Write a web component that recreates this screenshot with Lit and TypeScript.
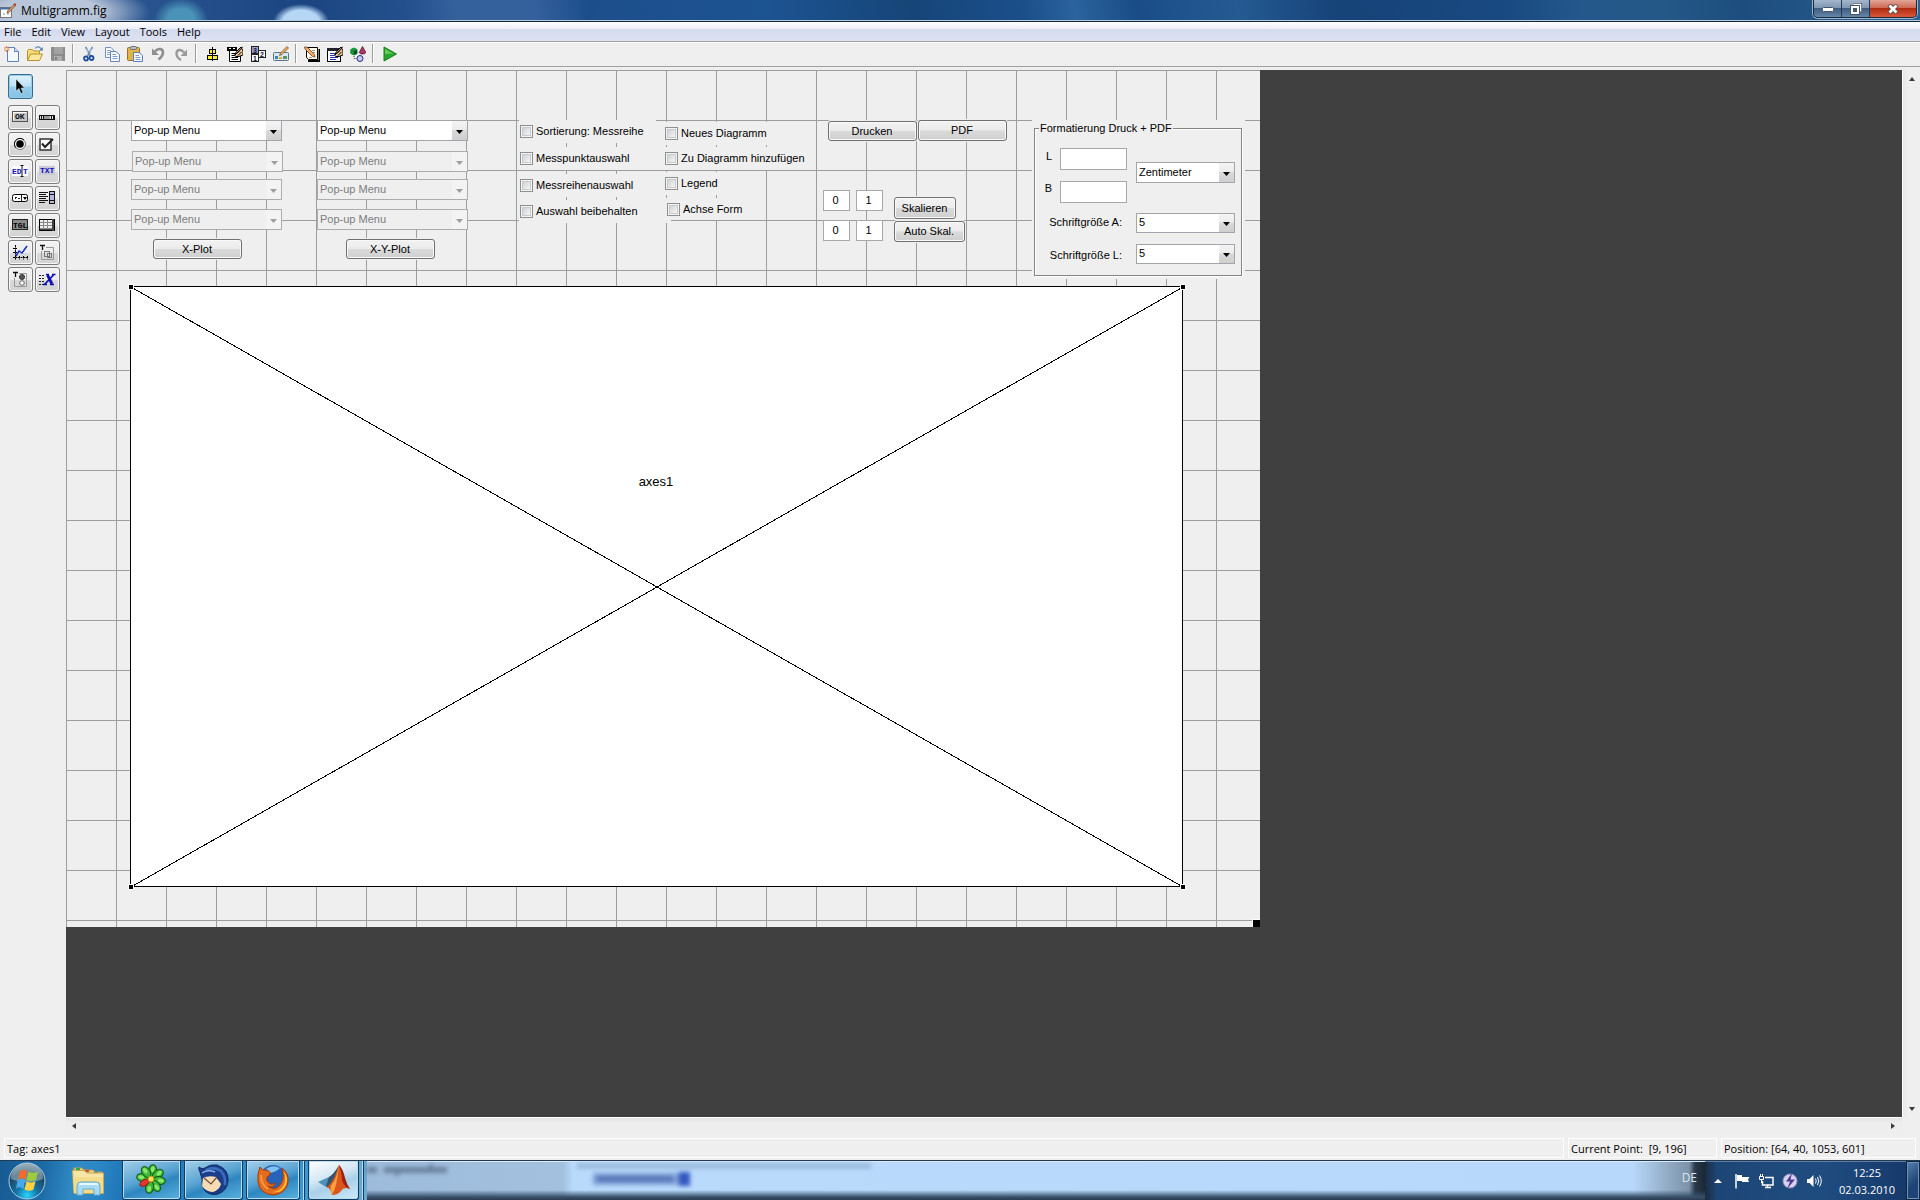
import { LitElement, html, svg, css, nothing } from "lit";
import type { TemplateResult, SVGTemplateResult } from "lit";
import { customElement } from "lit/decorators.js";
import { classMap } from "lit/directives/class-map.js";
import { styleMap } from "lit/directives/style-map.js";

interface Widget {
  kind: "popup" | "button" | "check" | "edit" | "label";
  id: string;
  text: string;
  x: number;
  y: number;
  w: number;
  h: number;
  off?: boolean;
}

const icon = (size: number, body: SVGTemplateResult): TemplateResult =>
  html`<svg width=${size} height=${size} viewBox="0 0 ${size} ${size}" aria-hidden="true">${body}</svg>`;

const MENUS = ["File", "Edit", "View", "Layout", "Tools", "Help"];

const pencil = svg`
  <path d="M15 0.500L16 2L9.500 9L7 10L8 7.500Z" fill="#f0a050" stroke="#6b4a35" stroke-width="0.800"/>
  <path d="M14 1L15.500 2.500" stroke="#b03a28" stroke-width="1.500"/>`;

/* Small hand holding a pen, drawn over menu-like pages. */
const hand = svg`
  <path d="M14 1L9.500 5.500L7.500 9.500L9 10.500H12L16 9V5Z" fill="#e8c69a" stroke="#000" stroke-width="1"/>
  <path d="M16 0.500L8 9M11 9.500L14.500 6M10 7.500L13 4.500" stroke="#000" stroke-width="1"/>`;

const TOOLS: (null | { name: string; art: SVGTemplateResult })[] = [
  {
    name: "New",
    art: svg`<path d="M3.500 1.500H10.500L14.500 5.500V15.500H3.500Z" fill="#f3f8ff" stroke="#5e82bd"/>
      <path d="M10.500 1.500V5.500H14.500" fill="#cfe0f7" stroke="#5e82bd"/>
      <path d="M2.500 0V6M0 3H5.500M0.500 0.800L4.700 5.200M4.700 0.800L0.500 5.200" stroke="#e0713f"/>
      <circle cx="2.500" cy="3" r="1.200" fill="#fff3c0"/>`,
  },
  {
    name: "Open",
    art: svg`<path d="M0.500 14.500V4.500L1.500 3.500H5.500L7 5H12.500V8" fill="#f6d978" stroke="#b8912a"/>
      <path d="M0.500 14.500L3.500 8H15.500L12.500 14.500Z" fill="#fbe89a" stroke="#b8912a"/>
      <path d="M8 2.500C10 0 13 0.500 14 3" fill="none" stroke="#5a84b5" stroke-width="1.200"/>
      <path d="M15.800 1V4.800H12Z" fill="#5a84b5"/>`,
  },
  {
    name: "Save",
    art: svg`<path d="M1 1H15V15H2L1 14Z" fill="#8c8c8c"/><rect x="4" y="1" width="9" height="7" fill="#a3a3a3"/>
      <rect x="4" y="10" width="8" height="5" fill="#adadad"/><rect x="5" y="11" width="2" height="3" fill="#808080"/>`,
  },
  null,
  {
    name: "Cut",
    art: svg`<path d="M4.500 1L9.500 10M11.500 1L6.500 10" stroke="#6f8db8" stroke-width="1.600"/>
      <path d="M5 3L7 6M11 3L9 6" stroke="#c9d8ec"/>
      <circle cx="5" cy="12.500" r="2" fill="none" stroke="#1f4f9c" stroke-width="1.800"/>
      <circle cx="10.500" cy="12" r="2" fill="none" stroke="#1f4f9c" stroke-width="1.800"/>`,
  },
  {
    name: "Copy",
    art: svg`<path d="M1.500 1.500H7L9.500 4V11.500H1.500Z" fill="#f5f9ff" stroke="#7290c2"/>
      <path d="M3 4.500H7M3 6.500H7M3 8.500H6" stroke="#8fa9d3"/>
      <path d="M6.500 5.500H12L15.500 8.500V15.500H6.500Z" fill="#f5f9ff" stroke="#6684ba"/>
      <path d="M8.500 8.500H12M8.500 10.500H13.500M8.500 12.500H13.500" stroke="#7f9bca"/>`,
  },
  {
    name: "Paste",
    art: svg`<rect x="0.500" y="1.500" width="12" height="13" rx="1" fill="#e2b440" stroke="#957130"/>
      <rect x="3.500" y="0.500" width="6" height="3" rx="1" fill="#b5bac4" stroke="#6d727c"/>
      <path d="M6.500 6.500H12L15.500 9.500V15.500H6.500Z" fill="#f5f9ff" stroke="#5b7cb5"/>
      <path d="M8.500 9.500H12M8.500 11.500H13.500M8.500 13.500H13.500" stroke="#7f9bca"/>`,
  },
  {
    name: "Undo",
    art: svg`<path d="M5 5.500C8 1.500 13 2.500 13 6.500C12.800 10 10.500 12 8.500 13.500" fill="none" stroke="#8e8e8e" stroke-width="2.600"/>
      <path d="M2 2.500V9H9Z" fill="#8e8e8e"/>`,
  },
  {
    name: "Redo",
    art: svg`<path d="M11 6.500C8 2.500 3.500 3.500 3.500 7.500C3.700 11 6 13 8 14" fill="none" stroke="#9a9a9a" stroke-width="2.400"/>
      <path d="M14 3.500V10H7.500Z" fill="#9a9a9a"/>`,
  },
  null,
  {
    name: "Align Objects",
    art: svg`<g shape-rendering="crispEdges"><path d="M8.500 1V15" stroke="#000"/>
      <rect x="5.500" y="3.500" width="6" height="4" fill="#ffee20" stroke="#000"/>
      <rect x="3.500" y="9.500" width="10" height="4" fill="#ffee20" stroke="#000"/><path d="M8.500 3V14" stroke="#000"/></g>`,
  },
  {
    name: "Menu Editor",
    art: svg`<path d="M0.500 1.500H9.500V4.500H13.500V15.500H2.500V4.500H0.500Z" fill="#fff" stroke="#000"/>
      <rect x="0" y="1" width="10" height="4" fill="#000"/><path d="M2 2.500H4M6 2.500H8" stroke="#fff"/>
      <path d="M4.500 7.500H8M4.500 9.500H8M4.500 11.500H11M4.500 13.500H11" stroke="#000"/>${hand}`,
  },
  {
    name: "Tab Order Editor",
    art: svg`<g shape-rendering="crispEdges"><rect x="1.500" y="0.500" width="7" height="7" fill="#9fa2c8" stroke="#222"/>
      <rect x="8.500" y="4.500" width="7" height="7" fill="#fff" stroke="#222"/>
      <rect x="1.500" y="8.500" width="7" height="7" fill="#fff" stroke="#222"/></g>
      <g font-family="Liberation Sans" font-size="7" font-weight="bold" fill="#10103c"><text x="3" y="6.500">3</text><text x="10" y="10.500">2</text><text x="3" y="14.500">1</text></g>`,
  },
  {
    name: "Toolbar Editor",
    art: svg`<rect x="0.500" y="6.500" width="15" height="8" rx="1" fill="#d9e8f5" stroke="#5c7487"/>
      <rect x="2" y="10" width="3" height="3" fill="#467eb0"/><rect x="6" y="11" width="3" height="2" fill="#d7aa3c"/>
      <rect x="10" y="10" width="4" height="3" fill="#5b9561"/>
      <path d="M14 0.500L15.500 2L9 8.500L6.500 9.500L7.500 7Z" fill="#f0b060" stroke="#7a5030" stroke-width="0.800"/>`,
  },
  null,
  {
    name: "M-file Editor",
    art: svg`<path d="M4 15H15.500V3" fill="none" stroke="#000" stroke-width="2"/>
      <path d="M2.500 1.500H13.500V13.500H4.500L2.500 11.500Z" fill="#fffbe8" stroke="#000"/>
      <path d="M8 4.500H11M9 6.500H11M5 11.500H8" stroke="#999"/>
      <path d="M0.500 1L3 1L10.500 8.500L11 11L8.500 10.500L1 3Z" fill="#f3ad6b" stroke="#6b3d20" stroke-width="0.800"/>`,
  },
  {
    name: "Property Inspector",
    art: svg`<rect x="0.500" y="2.500" width="13" height="13" fill="#fff" stroke="#000"/><rect x="0" y="2" width="14" height="3" fill="#223"/>
      <path d="M3 7.500H8M3 9.500H7M3 11.500H11M3 13.500H9" stroke="#2233c0"/>${hand}`,
  },
  {
    name: "Object Browser",
    art: svg`<path d="M4 2L7 3.500V7.500L4 9L0.800 7.500V3.500Z" fill="#1d8c3c" stroke="#093"/><path d="M4 5.500V9L7 7.500V4Z" fill="#054a1c"/>
      <path d="M12.500 0.500L15.800 6.500C15 8.500 10 8.500 9.300 6.500Z" fill="#b03668" stroke="#511030" stroke-width="0.800"/>
      <circle cx="10" cy="12.500" r="3" fill="#c2caf5" stroke="#26307a"/>
      <path d="M4 10V12.500H6.500" fill="none" stroke="#333" stroke-dasharray="1 1"/>`,
  },
  null,
  {
    name: "Run",
    art: svg`<path d="M3 1L15.500 8L3 15Z" fill="#2aa52e" stroke="#14801c"/><path d="M4 3L12 7.500L4 8Z" fill="#66cc5c"/>`,
  },
];

const glyph = (text: string, fill: string, x: number, y: number) =>
  svg`<text x=${x} y=${y} font-family="Liberation Mono" font-size="8" font-weight="bold" fill=${fill}>${text}</text>`;

const PALETTE: { name: string; art: SVGTemplateResult }[] = [
  { name: "Push Button", art: svg`<rect x="0.500" y="2.500" width="15" height="10" fill="#c6c6c6" stroke="#555"/><path d="M1.500 11.500V3.500H14.500" stroke="#fff" fill="none"/>${glyph("OK", "#111", 3, 10)}` },
  { name: "Slider", art: svg`<g shape-rendering="crispEdges"><rect x="0" y="6" width="16" height="5" fill="#111"/><path d="M1 8.500H5M11 8.500H15" stroke="#ddd" stroke-width="3" stroke-dasharray="1 1"/><rect x="5" y="7" width="6" height="3" fill="#9a9a9a"/></g>` },
  { name: "Radio Button", art: svg`<circle cx="8" cy="8" r="5.500" fill="#fff" stroke="#777"/><path d="M4 12A5.500 5.500 0 0 1 12 4" fill="none" stroke="#111"/><circle cx="8" cy="8" r="3.800" fill="#000"/>` },
  { name: "Check Box", art: svg`<rect x="1" y="3" width="11" height="11" fill="#fff" stroke="#333" stroke-width="1.500"/><path d="M3 7.500L6 11L14 3" fill="none" stroke="#222" stroke-width="2"/>` },
  { name: "Edit Text", art: svg`<rect x="0" y="3" width="16" height="10" fill="#fff"/>${glyph("ED", "#1212b8", 0, 10.5)}${glyph("T", "#1212b8", 11, 10.5)}<path d="M8.500 2.500H11.500M10 3V13M8.500 13.500H11.500" stroke="#111"/>` },
  { name: "Static Text", art: svg`<rect x="0" y="3" width="16" height="9" fill="#c9c9d8"/>${glyph("TXT", "#1212b8", 1, 10)}` },
  { name: "Pop-up Menu", art: svg`<rect x="0.500" y="4.500" width="15" height="7" rx="2" fill="#fff" stroke="#000"/><path d="M3 7.500H5M3 8.500H4M6 8.500H8M9.500 5V11" stroke="#222"/><path d="M11 7H15L13 10Z" fill="#000"/>` },
  { name: "Listbox", art: svg`<g shape-rendering="crispEdges"><path d="M0 2.500H9M0 4.500H7M0 6.500H9M0 8.500H7M0 10.500H9M0 12.500H6" stroke="#111"/><rect x="10.500" y="1.500" width="5" height="12" fill="#b9b9e0" stroke="#111"/><path d="M10 4.500H16M10 10.500H16" stroke="#111"/></g>` },
  { name: "Toggle Button", art: svg`<rect x="0.500" y="2.500" width="15" height="10" fill="#8a8a8a" stroke="#222"/>${glyph("TGL", "#000", 1, 10.5)}` },
  { name: "Table", art: svg`<g shape-rendering="crispEdges"><rect x="0.500" y="2.500" width="15" height="11" fill="#eee" stroke="#000"/><path d="M1 5.500H13M1 8.500H13M1 11.500H13M4.500 3V13M8.500 3V13" stroke="#888"/><rect x="13" y="2" width="2" height="12" fill="#444"/><path d="M1 12.500H15" stroke="#444"/></g>` },
  { name: "Axes", art: svg`<path d="M3.500 1V16M1 13.500H16M1 4.500H5M1 8.500H5M7.500 12V15.500M11.500 12V15.500M15.500 12V15.500" stroke="#000" stroke-dasharray="2 0.500"/><path d="M4 12L7 7L10 9L15 2" fill="none" stroke="#1530c0" stroke-width="1.500"/>` },
  { name: "Panel", art: svg`<path d="M7 3.500H14.500V15.500H2.500V7" fill="none" stroke="#999"/><path d="M1 1.500H6M3.500 1V6" stroke="#111" stroke-width="1.300"/><rect x="5.500" y="7.500" width="5" height="5" fill="none" stroke="#777"/><rect x="8.500" y="9.500" width="4" height="4" fill="none" stroke="#777"/>` },
  { name: "Button Group", art: svg`<path d="M7 2.500H14.500V15.500H2.500V7" fill="none" stroke="#999"/><path d="M1 1.500H6M3.500 1V6" stroke="#111" stroke-width="1.300"/><circle cx="10" cy="6" r="2.500" fill="#555" stroke="#333"/><circle cx="10" cy="12" r="2.300" fill="#fff" stroke="#666"/>` },
  { name: "ActiveX Control", art: svg`<path d="M0 4.500H6M0 7.500H6M0 10.500H5M0 13.500H4" stroke="#222" stroke-dasharray="2 1"/><path d="M7 3.500H10M13 3.500H16.500M4 13.500H8M11 13.500H15" stroke="#1010b0" stroke-width="1.500"/><path d="M8.500 4L13 13" stroke="#1010b0" stroke-width="2.800"/><path d="M14.500 4L5.500 13.500" stroke="#1010b0" stroke-width="1.800"/>` },
];

const popup = (id: string, x: number, y: number, text = "Pop-up Menu", off = false, w = 151, h = 21): Widget =>
  ({ kind: "popup", id, text, x, y, w, h, off });
const button = (id: string, text: string, x: number, y: number, w = 89, h = 20): Widget =>
  ({ kind: "button", id, text, x, y, w, h });
const check = (id: string, text: string, x: number, y: number, w: number, h = 23): Widget =>
  ({ kind: "check", id, text, x, y, w, h });
const edit = (id: string, text: string, x: number, y: number, w = 27, h = 21): Widget =>
  ({ kind: "edit", id, text, x, y, w, h });
const caption = (id: string, text: string, x: number, y: number, w: number): Widget =>
  ({ kind: "label", id, text, x, y, w, h: 14 });

/* Positions are figure coordinates, measured from the top left of the figure. */
const WIDGETS: Widget[] = [
  popup("x1", 65, 50), popup("x2", 66, 81, undefined, true), popup("x3", 65, 109, undefined, true), popup("x4", 65, 139, undefined, true),
  button("xplot", "X-Plot", 87, 169),
  popup("y1", 251, 50), popup("y2", 251, 81, undefined, true), popup("y3", 251, 109, undefined, true), popup("y4", 251, 139, undefined, true),
  button("xyplot", "X-Y-Plot", 280, 169),
  check("sort", "Sortierung: Messreihe", 453, 50, 137),
  check("points", "Messpunktauswahl", 453, 77, 137),
  check("rows", "Messreihenauswahl", 453, 104, 137),
  check("keep", "Auswahl beibehalten", 453, 130, 152),
  check("new", "Neues Diagramm", 598, 52, 130),
  check("add", "Zu Diagramm hinzufügen", 598, 77, 145),
  check("legend", "Legend", 598, 102, 95),
  check("form", "Achse Form", 600, 128, 92, 22),
  button("print", "Drucken", 762, 51), button("pdf", "PDF", 852, 50, 89, 21),
  edit("xmin", "0", 757, 120), edit("xmax", "1", 790, 120),
  edit("ymin", "0", 757, 150), edit("ymax", "1", 790, 150),
  button("scale", "Skalieren", 828, 127, 62, 22), button("auto", "Auto Skal.", 828, 151, 71, 21),
];

/* Positions inside the format panel. */
const FORMAT: Widget[] = [
  caption("len", "L", 7, 21, 10), edit("len", "", 25, 19, 67, 22),
  caption("wid", "B", 7, 53, 10), edit("wid", "", 25, 52, 67, 22),
  popup("unit", 101, 33, "Zentimeter", false, 99, 21),
  caption("fonta", "Schriftgröße A:", 2, 87, 85), popup("fonta", 101, 84, "5", false, 99, 20),
  caption("fontl", "Schriftgröße L:", 2, 120, 85), popup("fontl", 101, 115, "5", false, 99, 20),
];

@customElement("guide-figure")
class GuideFigure extends LitElement {
  static styles = css`
    :host { display: block; font: 11px/13px "Liberation Sans", Arial, sans-serif; color: #000; }
    input, select, button { font: inherit; color: inherit; margin: 0; border-radius: 0; box-sizing: border-box; }
    .figure { position: relative; width: 1194px; height: 857px; background-color: #efefef;
      background-image: linear-gradient(#9d9d9d 1px, transparent 1px), linear-gradient(90deg, #9d9d9d 1px, transparent 1px); background-size: 50px 50px; }
    .item { position: absolute; }
    .mask { position: absolute; left: 966px; top: 50px; width: 213px; height: 159px; box-sizing: border-box; padding: 8px 3px 3px 2px; background: #efefef; }
    .panel { position: relative; height: 100%; box-sizing: border-box; border: 1px solid #848484; box-shadow: inset 1px 1px #fff, 1px 1px #fff; }
    .heading { position: absolute; left: 4px; top: -7px; padding: 0 1px; background: #efefef; white-space: nowrap; }
    .caption { text-align: right; white-space: nowrap; }
    .axes { position: absolute; left: 62px; top: 214px; display: block; }
    .grip { position: absolute; right: 0; bottom: 0; width: 7px; height: 7px; background: #000; box-shadow: 0 0 0 1px #fff; clip-path: inset(-1px 0 0 -1px); }
    .popup { display: grid; height: 100%; box-sizing: border-box; border: 1px solid #a3a5a8; background: #fff; }
    .popup select { grid-area: 1 / 1; appearance: none; border: 0; background: none; padding: 0 18px 1px 2px; width: 100%; height: 100%; outline: 0; opacity: 1; color: inherit; }
    .drop { grid-area: 1 / 1; justify-self: end; width: 15px; display: grid; place-items: center; padding-top: 2px; background: linear-gradient(#f4f4f4, #ececec 45%, #d9d9d9 50%, #cfcfcf); pointer-events: none; }
    .off { background: #efefef; color: #7d7d7d; border-color: #adadad; }
    .off .drop { background: #f3f3f3; }
    .push { width: 100%; height: 100%; padding: 0 1px 0 0; border: 1px solid #707070; border-radius: 3px; background: linear-gradient(#f2f2f2, #ebebeb 48%, #dadada 52%, #cfcfcf); box-shadow: inset 0 0 0 1px #f9f9f9, 0 0 0 1px #efefef; display: block; }
    .check { display: flex; align-items: center; gap: 3px; height: 100%; padding: 0 0 0 1px; background: #efefef; white-space: nowrap; }
    .check input { appearance: none; width: 13px; height: 13px; border: 1px solid #8e8f8f; background: linear-gradient(135deg, #c4c8ce, #f4f4f4 80%); box-shadow: inset 0 0 0 1px #f4f4f4, inset 0 0 0 2px #c8cbce; }
    .edit { display: block; width: 100%; height: 100%; padding: 0 2px 1px 0; border: 1px solid #a8a8a8; background: #fff; text-align: center; outline: 0; }
  `;

  private body(w: Widget, captioned: boolean) {
    const name = captioned ? nothing : w.id;
    if (w.kind === "label") return html`<label for=${w.id}>${w.text}</label>`;
    if (w.kind === "popup")
      return html`<div class=${classMap({ popup: true, off: !!w.off })}>
        <select id=${w.id} aria-label=${name} ?disabled=${w.off}><option>${w.text}</option></select>
        <span class="drop"><svg width="7" height="4" viewBox="0 0 7 4"><path d="M0 0H7L3.500 4Z" fill=${w.off ? "#9d9d9d" : "#000"} /></svg></span>
      </div>`;
    if (w.kind === "button") return html`<button class="push">${w.text}</button>`;
    if (w.kind === "check") return html`<label class="check"><input type="checkbox" />${w.text}</label>`;
    return html`<input class="edit" id=${w.id} type="text" aria-label=${name} .value=${w.text} />`;
  }

  private place(list: Widget[]) {
    const captions = new Set(list.filter((w) => w.kind === "label").map((w) => w.id));
    return list.map((w) => html`<div class=${classMap({ item: true, caption: w.kind === "label" })}
      style=${styleMap({ left: `${w.x}px`, top: `${w.y}px`, width: `${w.w}px`, height: `${w.h}px` })}>${this.body(w, captions.has(w.id))}</div>`);
  }

  render() {
    const corners = [[3, 3], [1055, 3], [3, 603], [1055, 603]];
    return html`<div class="figure">
      ${this.place(WIDGETS)}
      <div class="mask"><div class="panel"><span class="heading">Formatierung Druck + PDF</span>${this.place(FORMAT)}</div></div>
      <svg class="axes" width="1061" height="609" viewBox="0 0 1061 609">
        <g shape-rendering="crispEdges">
          <rect x="2.500" y="2.500" width="1052" height="600" fill="#fff" stroke="#000" />
          <path d="M3 3L1055 603M3 603L1055 3" stroke="#000" />
          ${corners.map(([x, y]) => svg`<rect x=${x - 3} y=${y - 3} width="6" height="6" fill="#fff"/><rect x=${x - 2} y=${y - 2} width="4" height="4" fill="#000"/>`)}
        </g>
        <text x="528" y="202" text-anchor="middle" font-size="13">axes1</text>
      </svg>
      <span class="grip"></span>
    </div>`;
  }
}

@customElement("task-bar")
class TaskBar extends LitElement {
  static styles = css`
    :host { display: block; font: 11px/16px "Open Sans", "Noto Sans", sans-serif; color: #fff; }
    .bar { display: flex; align-items: stretch; height: 40px; box-sizing: border-box; border-top: 1px solid #23394f; overflow: hidden;
      background: linear-gradient(100deg, #175a92, #1d6aa5 45px, #2f8ac4 75px, #2b86c6 100px, #1d72b2 130px, #3a97cf 300px, #6fa8d0 365px); }
    button { font: inherit; color: inherit; margin: 0; padding: 0; border: 0; background: none; display: grid; place-items: center; flex: none; }
    .start { width: 54px; padding-top: 1px; }
    .files { width: 68px; }
    .app { width: 59px; margin-right: 3px; border: 1px solid #0c3d62; border-width: 0 1px 1px; border-radius: 0 0 3px 3px; box-shadow: inset 0 0 0 1px #b9dcf2; background: linear-gradient(160deg, #a4cfea, #58a3d2 45%, #2e86bf 60%, #59b2de); box-sizing: border-box; }
    .multi { width: 54px; margin-right: 0; }
    .stack { width: 4px; margin-right: 3px; border-right: 1px solid #0c3d62; box-shadow: inset -1px 0 #b9dcf2; flex: none; }
    .active { width: 51px; background: linear-gradient(160deg, #fff, #d5e8f4 40%, #a9d0e8 60%, #cdeafa); }
    .glass { flex: 1; display: flex; border-top: 1px solid #dcebfa; background: linear-gradient(transparent 28px, #38506b 35px, #263548 39px), linear-gradient(90deg, #9dbbda, #a3c1df 196px, #b9dafb 206px, #b7d8fa calc(100% - 72px), #8aa2ba calc(100% - 30px), #7c93aa calc(100% - 16px), #28394b calc(100% - 10px), #1a2634); }
    .haze { width: 206px; }
    .haze svg { display: block; filter: blur(2px); }
    .lang { margin-left: auto; padding: 8px 8px 0 0; font-size: 12px; color: #dbe3ec; }
    .tray { display: flex; align-items: center; gap: 8px; padding-left: 5px; border-top: 1px solid #5d7da3; background: linear-gradient(90deg, #1a2c42, #1d4675 12px, #1f4c80 120px, #17396a); }
    .clock { width: 66px; text-align: center; white-space: nowrap; padding: 0 6px 0 4px; line-height: 17px; }
    .show { width: 14px; border: 1px solid #0e2545; box-shadow: inset 0 0 0 1px #6e91b7; background: linear-gradient(135deg, #5580ad, #1d4474 60%); }
  `;

  render() {
    return html`<nav class="bar" aria-label="Taskbar">
      <button class="start" aria-label="Start"><svg width="38" height="38" viewBox="0 0 38 38">
        <defs><radialGradient id="orb" cx="50%" cy="90%" r="85%"><stop offset="0" stop-color="#27d5fb"/><stop offset="0.350" stop-color="#1475a8"/><stop offset="0.750" stop-color="#1d4661"/><stop offset="1" stop-color="#6b8797"/></radialGradient></defs>
        <circle cx="19" cy="19" r="18" fill="url(#orb)" stroke="#a7cde3"/><path d="M3 17A16 16 0 0 1 35 17Q19 24 3 17Z" fill="#c8d8e0" opacity="0.450"/>
        <path d="M12 9Q16 7 19 9L17.500 17.500Q14 15 10 17.500Z" fill="#f26a2c"/><path d="M20.500 9.500Q25 12 30 9.500L28 18Q23 20 18.500 18Z" fill="#9ccb3c"/>
        <path d="M9.500 18.500Q13.500 16 17 18.500L15.500 27Q12 24 8 26.500Z" fill="#4aa8ea"/><path d="M18.500 19.500Q23 21.500 27.500 19.500L25.500 27.500Q21 30 16.500 27.500Z" fill="#ffd23f"/></svg></button>
      <button class="files" aria-label="Explorer"><svg width="34" height="32" viewBox="0 0 34 32">
        <path d="M3 5V3H11L13 5H22L24 7H31V11" fill="#e9cf7e" stroke="#bd9b49"/><rect x="5" y="3" width="4" height="2" fill="#2fa84a"/><rect x="14" y="5" width="4" height="2" fill="#d24c34"/><rect x="23" y="7" width="4" height="2" fill="#3a8bd2"/>
        <path d="M1.500 5.500H13L16 8H32.500V28.500H3Z" fill="#f7e6a4" stroke="#c9a854"/><path d="M2 12H32V28H3Z" fill="#f3dc8c"/>
        <path d="M6 30V21Q6 17 10 17H25Q29 17 29 21V30H23V24H12V30Z" fill="#a7dbf5" stroke="#64a9cf"/><path d="M8 19H27" stroke="#e8faff" stroke-width="2"/></svg></button>
      <button class="app" aria-label="ICQ"><svg width="34" height="32" viewBox="0 0 34 32">
        ${[10, 55, 100, 145, 190, 280, 325].map((a) => svg`<ellipse cx="16" cy="6.500" rx="4" ry="6" fill="#3fb834" stroke="#125a18" transform="rotate(${a} 16 15)"/><ellipse cx="16" cy="5" rx="1.800" ry="3" fill="#8ae86c" transform="rotate(${a} 16 15)"/>`)}
        <ellipse cx="16" cy="7.500" rx="3" ry="5" fill="#e4362b" stroke="#8c1712" transform="rotate(240 16 15)"/>
        <circle cx="16" cy="15" r="3" fill="#ffe45a" stroke="#b78c1c"/></svg></button>
      <button class="app" aria-label="Thunderbird"><svg width="34" height="32" viewBox="0 0 34 32">
        <path d="M3 8Q1 5 2 3Q5 6 8 4Q13 0 20 1Q32 5 31 17Q30 27 21 30Q14 32 8 27Q4 22 5 15Z" fill="#1c3f8c" stroke="#122c62"/>
        <path d="M9 6Q17 2 24 7Q29 13 28 21" fill="none" stroke="#3d6fc0" stroke-width="2.500"/><path d="M5 9Q11 5 18 8" fill="none" stroke="#86aee6" stroke-width="1.500"/>
        <path d="M6 14Q12 11 19 13L24 20Q22 27 17 28Q9 28 5 22Z" fill="#f5dcb4"/><path d="M7 14L14 20L20 13" fill="none" stroke="#6d4d38" stroke-width="1.200"/>
        <path d="M12 29Q20 28 25 21L23 28Q18 32 12 29Z" fill="#163a7c"/></svg></button>
      <button class="app multi" aria-label="Firefox"><svg width="34" height="34" viewBox="0 0 34 34">
        <circle cx="17" cy="15" r="13" fill="#2763b8"/><path d="M10 6Q16 1 24 5Q20 9 14 10Z" fill="#7ec1f0"/>
        <path d="M4 4Q6 8 10 7Q15 8 14 12Q10 13 11 18Q14 23 20 20Q17 26 12 23Q19 29 25 21Q29 14 26 5Q33 10 32 19Q30 31 17 32Q4 31 2 19Q1 11 4 4Z" fill="#e56b1d" stroke="#a63a0c"/>
        <path d="M27 8Q31 15 28 22Q24 29 16 29Q25 31 30 22Q33 14 27 8Z" fill="#ffc73a"/><path d="M5 12Q5 22 12 26" stroke="#f69b3c" stroke-width="2" fill="none"/></svg></button>
      <span class="stack"></span>
      <button class="app multi active" aria-label="MATLAB"><svg width="34" height="32" viewBox="0 0 34 32">
        <path d="M1 18L12 13L16 17L9 23Z" fill="#4b91b8"/><path d="M12 13Q17 10 22 1L17 18L11 24L9 22Z" fill="#35556e"/>
        <path d="M22 1Q26 5 28 15Q30 23 33 25Q27 22 24 27Q21 31 15 31Q14 25 10 23Q17 18 22 1Z" fill="#dc551c"/>
        <path d="M22 1Q20 14 15 20Q12 24 15 31Q20 23 22 1Z" fill="#f9a03c"/><path d="M22 1Q25 9 25 16Q27 23 33 25Q30 21 28 14Q26 5 22 1Z" fill="#9d2114"/></svg></button>
      <span class="stack"></span>
      <div class="glass">
        <div class="haze"><svg width="760" height="34" viewBox="0 0 760 34"><path d="M0 8H10M17 8H80" stroke="#43566f" stroke-width="6" opacity="0.550"/><path d="M28 12H32M62 4H66" stroke="#43566f" stroke-width="4" opacity="0.500"/>
          <path d="M210 4H504" stroke="#98b8d8" stroke-width="5"/><path d="M226 17H312" stroke="#7f9fd6" stroke-width="12"/><path d="M230 17H306" stroke="#5274b4" stroke-width="5"/><rect x="312" y="10" width="11" height="14" fill="#3358c0"/></svg></div>
        <span class="lang">DE</span>
      </div>
      <div class="tray">
        <svg width="16" height="16" viewBox="0 0 16 16"><path d="M4 10L8 6L12 10Z" fill="#fff"/></svg>
        <svg width="16" height="16" viewBox="0 0 16 16"><path d="M2 1V15.500" stroke="#fff" stroke-width="1.500"/><path d="M3 2H8V4H15.500L14 6.500L15 9H8V8H3Z" fill="#fff"/></svg>
        <svg width="16" height="16" viewBox="0 0 16 16"><path d="M7 4.500H15V12H4.500V8M7 14.500H13M9.500 12V14" fill="none" stroke="#fff" stroke-width="1.500"/><path d="M1.500 3.500H5.500V6.500H1.500ZM2.500 1V3M4.500 1V3M3.500 7V10" fill="none" stroke="#fff"/></svg>
        <svg width="16" height="16" viewBox="0 0 16 16"><circle cx="8" cy="8" r="7" fill="#d8d3ea" stroke="#9a90c4"/><path d="M10 0L4 8.500H8L5 16L13 6.500H8.500Z" fill="#4d3a94"/></svg>
        <svg width="16" height="16" viewBox="0 0 16 16"><path d="M1 6H3.500L7.500 2V14L3.500 10H1Z" fill="#fff"/><path d="M9.500 5.500Q11 8 9.500 10.500M11.500 4Q14 8 11.500 12M13.500 2.500Q17 8 13.500 13.500" fill="none" stroke="#fff"/></svg>
        <div class="clock">12:25<br />02.03.2010</div>
      </div>
      <button class="show" aria-label="Show desktop"></button>
    </nav>`;
  }
}

@customElement("app-root")
class AppRoot extends LitElement {
  static styles = css`
    :host { display: flex; flex-direction: column; min-height: 100vh; overflow: hidden; background: #efefef; font: 11px/16px "Open Sans", "Noto Sans", sans-serif; color: #000; }
    button { font: inherit; color: inherit; margin: 0; padding: 0; border: 0; background: none; }
    .title { display: flex; align-items: flex-start; height: 22px; box-sizing: border-box; border-bottom: 1px solid #14263c; box-shadow: inset 0 -1px #b4cbe2;
      background:
        radial-gradient(ellipse 100px 30px at 50px 12px, #b9c6d9 50%, #b9c6d900),
        radial-gradient(ellipse 28px 18px at 301px 22px, #b6d6f6 65%, #b6d6f600),
        radial-gradient(ellipse 27px 22px at 181px 20px, #4a93b8 50%, #4a93b800),
        linear-gradient(80deg, #7f95b8, #4a6c9f 80px, #2a5590 130px, #1b4580 300px, #23508c 400px, #34609c 450px, #34609c 530px, #1d4e8c 580px, #1c5391 760px, #164578 900px, #1b4f8a 1010px, #2a639d 1060px, #1a4d88 1120px, #245a92 1220px, #164378 1320px, #184980 1480px, #24588c 1560px, #245887 1640px, #1c4d7e 1720px, #2c6190); }
    .title svg { margin: 3px 3px 0 0; }
    .title .controls svg { margin: 0; }
    h1 { margin: 3px 0 0; font: 12px/16px "Open Sans", "Noto Sans", sans-serif; flex: 1; padding-left: 2px; }
    .controls { display: flex; margin-right: 3px; border: 1px solid #1a2a3e; border-top: 0; border-radius: 0 0 5px 5px; overflow: hidden; box-shadow: 0 0 0 1px #9eb6cf; }
    .controls button { display: grid; place-items: center; height: 17px; width: 28px; background: linear-gradient(#a4b6ca, #7f98b3 45%, #3f5d80 50%, #6587a9); border-right: 1px solid #24384f; }
    .controls .close { width: 46px; border: 0; background: linear-gradient(#e2a597, #cf6a55 45%, #b22c12 50%, #d9583a); }
    .menus { display: flex; align-items: center; gap: 10px; height: 20px; padding: 0 4px; box-sizing: border-box; border-bottom: 1px solid #a0a0a0; background: linear-gradient(#fff, #eceff8 35%, #d5dbee 40%, #dde2f3); }
    .tools { display: flex; align-items: center; height: 25px; padding-bottom: 2px; box-sizing: border-box; border-top: 1px solid #fff; border-bottom: 1px solid #9f9f9f; }
    .tools button { width: 23px; height: 22px; display: grid; place-items: center; }
    .sep { width: 2px; height: 19px; margin: 0 3px; border-left: 1px solid #9c9c9c; border-right: 1px solid #fff; box-sizing: border-box; }
    .work { flex: 1; display: grid; grid-template: 1fr 17px / 66px 1fr 18px; padding: 3px 0 4px; min-height: 900px; }
    .palette { grid-row: 1 / 3; display: grid; grid-template: 29px / 25px 25px; grid-auto-rows: 25px; gap: 2px; align-content: start; padding: 4px 0 0 8px; }
    .palette button { display: grid; place-items: center; border: 1px solid #7c7c7c; border-radius: 3px; background: linear-gradient(#f3f3f3, #ececec 50%, #d9d9d9 55%, #d3d3d3); box-shadow: inset 0 0 0 1px #f8f8f8; }
    .palette .select { grid-column: 1 / 3; width: 25px; height: 25px; border-color: #2f6d92; background: linear-gradient(#dff1fb, #bce2f6 48%, #94ccec 52%, #85c2e4); box-shadow: inset 0 0 0 1px #9ccce4; }
    .stage { background: #404040; min-width: 0; overflow: hidden; }
    .vbar, .hbar { display: flex; justify-content: space-between; align-items: center; }
    .vbar { flex-direction: column; padding: 5px 0 4px; border-left: 1px solid #fff; background: linear-gradient(90deg, #e7e7e7, #efefef 30%); }
    .hbar { padding: 0 5px 0 4px; border-top: 1px solid #fff; background: linear-gradient(#e3e3e3, #eeeeee 30%); }
    .vbar button, .hbar button { display: grid; place-items: center; width: 8px; height: 8px; }
    .status { display: flex; gap: 4px; padding: 0 4px 2px; }
    .status span { border: 1px solid #fff; padding: 2px 2px 0; white-space: pre; }
    .tag { flex: 1; }
    .point { width: 143px; }
    .pos { width: 189px; }
  `;

  private tip(d: string) {
    return html`<svg width="8" height="8" viewBox="0 0 8 8"><path d=${d} fill="#3c3c3c" /></svg>`;
  }

  render() {
    return html`
      <header class="title">
        ${icon(16, svg`<rect x="0.500" y="4.500" width="11" height="10" fill="#fff" stroke="#777"/><path d="M0 5.500H12" stroke="#4b6fa5" stroke-width="2"/><path d="M3 11H5M7 11H9" stroke="#888"/>${pencil}`)}
        <h1>Multigramm.fig</h1>
        <div class="controls">
          <button aria-label="Minimize"><svg width="12" height="6" viewBox="0 0 12 6"><rect x="0.500" y="1.500" width="11" height="4" rx="1" fill="#fff" stroke="#46566a"/></svg></button>
          <button aria-label="Restore"><svg width="12" height="12" viewBox="0 0 12 12"><path d="M3.500 1.500H11V9" fill="none" stroke="#46566a" stroke-width="3"/><path d="M3.500 1.500H10.500V8.500" fill="none" stroke="#fff" stroke-width="1.500"/><rect x="2" y="4" width="6" height="6" fill="none" stroke="#46566a" stroke-width="4"/><rect x="2" y="4" width="6" height="6" fill="#46566a" stroke="#fff" stroke-width="2"/></svg></button>
          <button class="close" aria-label="Close"><svg width="12" height="10" viewBox="0 0 12 10"><path d="M2 1L10 9M10 1L2 9" stroke="#5a4644" stroke-width="4.500"/><path d="M2.500 1.500L9.500 8.500M9.500 1.500L2.500 8.500" stroke="#fff" stroke-width="2.800"/></svg></button>
        </div>
      </header>
      <nav class="menus" aria-label="Menu">${MENUS.map((m) => html`<button>${m}</button>`)}</nav>
      <div class="tools" role="toolbar">
        ${TOOLS.map((t) => (t ? html`<button aria-label=${t.name}>${icon(16, t.art)}</button>` : html`<span class="sep"></span>`))}
      </div>
      <main class="work">
        <div class="palette">
          <button class="select" aria-label="Select">${icon(17, svg`<path d="M4 1V13L7 10.500L9 15.500L11 14.500L9 10H12.500Z" fill="#000" stroke="#e8f6ff" stroke-width="0.500"/>`)}</button>
          ${PALETTE.map((p) => html`<button aria-label=${p.name}>${icon(17, p.art)}</button>`)}
        </div>
        <div class="stage"><guide-figure></guide-figure></div>
        <div class="vbar"><button aria-label="Scroll up">${this.tip("M1 6L4 2L7 6Z")}</button><button aria-label="Scroll down">${this.tip("M1 2H7L4 6Z")}</button></div>
        <div class="hbar"><button aria-label="Scroll left">${this.tip("M6 1V7L2 4Z")}</button><button aria-label="Scroll right">${this.tip("M2 1V7L6 4Z")}</button></div>
      </main>
      <footer class="status">
        <span class="tag">Tag: axes1</span><span class="point">Current Point:  [9, 196]</span><span class="pos">Position: [64, 40, 1053, 601]</span>
      </footer>
      <task-bar></task-bar>`;
  }
}
